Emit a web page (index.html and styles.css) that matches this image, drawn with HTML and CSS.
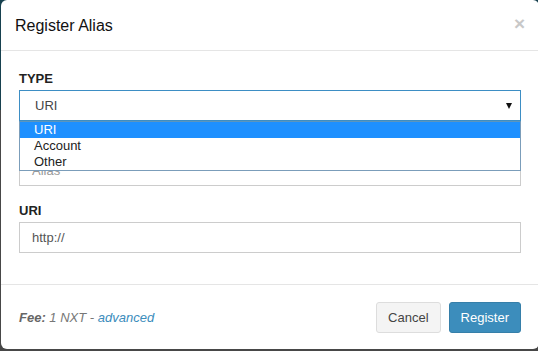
FILE: index.html
```html
<!DOCTYPE html>
<html lang="en">
<head>
  <meta charset="UTF-8">
  <title>Register Alias</title>
  <link rel="stylesheet" href="styles.css">
</head>

<body>

<div class="modal-content">
  <div class="modal-header">
    <span class="close">&times;</span>
    <h4 class="modal-title">Register Alias</h4>
  </div>

  <div class="modal-body">
    <div class="form-group select-group">
      <label>TYPE</label>
      <div class="select-box">
        <span>URI</span>
        <i class="caret"></i>
      </div>
      <ul class="select-list">
        <li class="active">URI</li>
        <li>Account</li>
        <li>Other</li>
      </ul>
    </div>

    <div class="form-group alias-group">
      <div class="form-control placeholder">Alias</div>
    </div>

    <div class="form-group">
      <label>URI</label>
      <div class="form-control">http://</div>
    </div>
  </div>

  <div class="modal-footer">
    <div class="fee"><b>Fee:</b> 1 NXT - <a href="#">advanced</a></div>
    <div class="buttons">
      <button class="btn btn-default">Cancel</button>
      <button class="btn btn-primary">Register</button>
    </div>
  </div>
</div>

</body>
</html>
```

FILE: styles.css
```css
* {
  margin: 0;
  padding: 0;
  box-sizing: border-box;
  font-family: 'Liberation Sans', Arial, sans-serif;
}

html, body {
  height: 100%;
  overflow: hidden;
}

body {
  background: linear-gradient(to bottom, #17414f 0, #17414f 110px, #474747 110px);
}

.modal-content {
  width: 538px;
  height: 349px;
  margin-left: 1px;
  background: #fff;
  border-radius: 6px;
  display: flex;
  flex-direction: column;
}

.modal-header {
  height: 51px;
  padding: 15px 14px;
  border-bottom: 1px solid #e5e5e5;
  display: flex;
  flex-direction: row-reverse;
  justify-content: space-between;
}

.modal-title {
  font-size: 16px;
  font-weight: normal;
  line-height: 22px;
  color: #111;
}

.close {
  font-size: 19px;
  font-weight: bold;
  line-height: 12px;
  color: #c8c8c8;
  margin-top: 3px;
}

.modal-body {
  padding: 18px 18px 15px 18px;
  height: 233px;
}

.form-group {
  margin-bottom: 15px;
  position: relative;
}

label {
  display: block;
  font-size: 13px;
  font-weight: bold;
  line-height: 20px;
  color: #222;
  margin-bottom: 1px;
}

.select-box {
  height: 31px;
  border: 1px solid #3d8ec4;
  display: flex;
  align-items: center;
  justify-content: space-between;
  padding: 0 8px 0 15px;
  font-size: 13px;
  color: #444;
}

.caret {
  width: 0;
  height: 0;
  border-left: 3.5px solid transparent;
  border-right: 3.5px solid transparent;
  border-top: 6px solid #111;
}

.select-list {
  list-style: none;
  position: absolute;
  top: 52px;
  left: 0;
  right: 0;
  background: #fff;
  border: 1px solid #7b9dba;
  border-top-color: #5d95bd;
  z-index: 10;
}

.select-list li {
  height: 16px;
  line-height: 16px;
  font-size: 13px;
  padding-left: 14px;
  color: #222;
}

.select-list li.active {
  background-color: #1e90ff;
  color: #fff;
}

.alias-group {
  padding-top: 19px;
}

.form-control {
  height: 31px;
  border: 1px solid #ccc;
  padding: 0 12px;
  display: flex;
  align-items: center;
  font-size: 13px;
  color: #555;
}

.placeholder {
  color: #999;
}

.modal-footer {
  border-top: 1px solid #e5e5e5;
  padding: 17px 18px 16px 18px;
  display: flex;
  justify-content: space-between;
  align-items: center;
}

.fee {
  font-size: 13px;
  font-style: italic;
  color: #777;
}

.fee b {
  color: #666;
}

.fee a {
  color: #3c8dbc;
  text-decoration: none;
}

.buttons {
  display: flex;
  gap: 8px;
}

.btn {
  height: 31px;
  padding: 0 11px;
  font-size: 13px;
  border-radius: 3px;
  border: 1px solid;
}

.btn-default {
  background-color: #f4f4f4;
  border-color: #ddd;
  color: #444;
}

.btn-primary {
  background-color: #3c8dbc;
  border-color: #367fa9;
  color: #fff;
}
```
